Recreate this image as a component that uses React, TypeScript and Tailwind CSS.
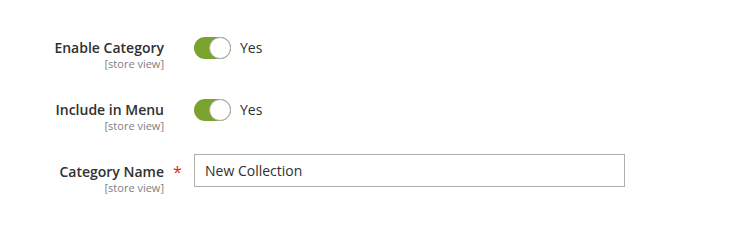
import React from "react";

function Toggle() {
  return (
    <div className="flex items-center">
      <div className="relative w-[37px] h-[22px] rounded-full bg-[#79a22e]">
        <span className="absolute right-0 top-0 w-[22px] h-[22px] rounded-full bg-white border border-[#adadad]" />
      </div>
      <span className="ml-[9px] text-[14px] leading-[22px] text-[#303030]">Yes</span>
    </div>
  );
}

function Label({ text, className = "" }: { text: string; className?: string }) {
  return (
    <div className={"w-[164px] text-right " + className}>
      <div className="text-[14px] leading-[22px] font-semibold text-[#303030]">{text}</div>
      <div className="text-[11px] leading-[10px] text-[#808080]">[store view]</div>
    </div>
  );
}

export default function App() {
  return (
    <div className="w-[743px] h-[225px] bg-white pt-[37px] font-['Open_Sans',sans-serif]">
      <div className="flex items-start">
        <Label text="Enable Category" />
        <div className="w-[30px]" />
        <Toggle />
      </div>
      <div className="flex items-start mt-[30px]">
        <Label text="Include in Menu" />
        <div className="w-[30px]" />
        <Toggle />
      </div>
      <div className="flex items-start mt-[23px]">
        <Label text="Category Name" className="pt-[7px]" />
        <div className="w-[30px] pt-[7px] pl-[9px] text-[16px] leading-[22px] text-[#e22626]">*</div>
        <input
          defaultValue="New Collection"
          className="w-[431px] h-[33px] border border-[#adadad] px-[10px] text-[14px] text-[#303030] outline-none font-['Open_Sans',sans-serif]"
        />
      </div>
    </div>
  );
}
